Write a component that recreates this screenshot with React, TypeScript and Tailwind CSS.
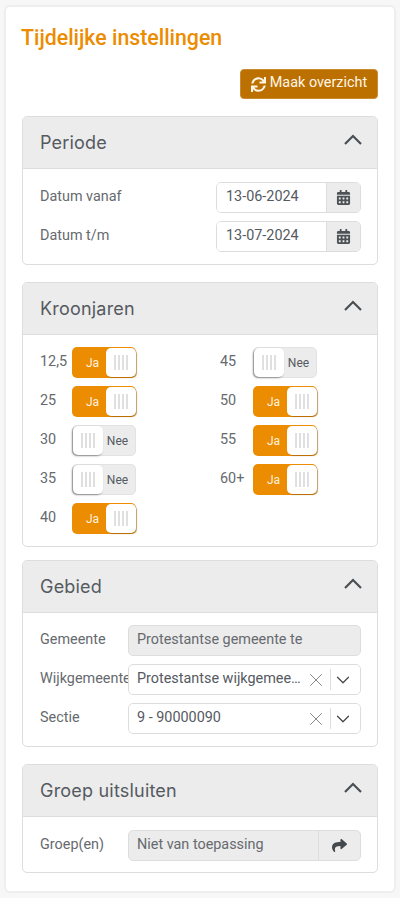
import React from 'react';
import { FaSync, FaCalendarAlt, FaShare } from 'react-icons/fa';
import { X, ChevronDown } from 'lucide-react';

const Panel: React.FC<{ title: string; className?: string; bodyClass?: string; children: React.ReactNode }> = ({ title, className = '', bodyClass = '', children }) => (
  <section className={`rounded-[5px] border border-[#dddddd] bg-white overflow-hidden ${className}`}>
    <div className="h-[52px] bg-[#ececec] border-b border-[#dddddd] flex items-center justify-between pl-[17px] pr-[15px]">
      <h2 className="text-[18px] leading-none text-[#555a5f] tracking-[0.2px] font-[Inter,sans-serif]">{title}</h2>
      <svg viewBox="0 0 18 11" className="w-[18px] h-[11px] -mt-[6px]" fill="none" stroke="#4a4f54" strokeWidth="2.2"><path d="M1 10 9 2l8 8" /></svg>
    </div>
    <div className={bodyClass}>{children}</div>
  </section>
);

const DateRow: React.FC<{ label: string; value: string }> = ({ label, value }) => (
  <div className="flex items-center justify-between h-[31px]">
    <span className="text-[14.4px] text-[#666a6e] pb-[1px]">{label}</span>
    <div className="flex w-[145px] h-[31px] rounded-[5px] border border-[#dddddd] overflow-hidden">
      <div className="w-[109px] pl-[9px] pb-[2px] flex items-center text-[14.4px] text-[#555a5f] bg-white">{value}</div>
      <div className="flex-1 bg-[#ececec] border-l border-[#dddddd] flex items-center justify-center">
        <FaCalendarAlt className="text-[15px] text-[#4d5257]" />
      </div>
    </div>
  </div>
);

const Grip = () => (
  <div className="flex gap-[2px]">
    <span className="w-[2px] h-[15px] bg-[#e0e0e0]" />
    <span className="w-[2px] h-[15px] bg-[#e0e0e0]" />
    <span className="w-[2px] h-[15px] bg-[#e0e0e0]" />
    <span className="w-[2px] h-[15px] bg-[#e0e0e0]" />
  </div>
);

const Toggle: React.FC<{ on: boolean }> = ({ on }) =>
  on ? (
    <div className="w-[64px] h-[31px] rounded-[5px] bg-[#ec8c00] flex items-center">
      <span className="w-[34px] pl-[7px] text-center text-[12px] text-[#fff3e0]">Ja</span>
      <div className="w-[30px] h-[29px] rounded-[5px] bg-white flex items-center justify-center shadow-[1px_1px_1px_rgba(150,90,0,0.6)]"><Grip /></div>
    </div>
  ) : (
    <div className="w-[64px] h-[31px] rounded-[5px] bg-[#ececec] border border-[#e2e2e2] flex items-center">
      <div className="w-[30px] h-[29px] rounded-[5px] bg-white flex items-center justify-center shadow-[-1px_1px_2px_rgba(0,0,0,0.4)]"><Grip /></div>
      <span className="flex-1 pr-[3px] text-center text-[12px] text-[#555a5f]">Nee</span>
    </div>
  );

const Kroon: React.FC<{ label: string; on: boolean; labelW: string }> = ({ label, on, labelW }) => (
  <div className="flex items-center h-[31px]">
    <span className={`${labelW} whitespace-nowrap text-[14.4px] text-[#666a6e] pb-[2px]`}>{label}</span>
    <Toggle on={on} />
  </div>
);

const SelectBox: React.FC<{ value: string }> = ({ value }) => (
  <div className="w-[233px] h-[31px] rounded-[5px] border border-[#dddddd] bg-white flex items-center pl-[8px]">
    <span className="w-[165px] truncate text-[14.4px] text-[#555a5f] pb-[1px]">{value}</span>
    <X className="w-[22px] h-[22px] ml-[3px] text-[#7d7d7d]" strokeWidth={1} />
    <span className="w-px h-[21px] bg-[#dddddd] ml-[3px]" />
    <ChevronDown className="w-[22px] h-[22px] ml-[1px] text-[#444444]" strokeWidth={1.3} />
  </div>
);

const FormRow: React.FC<{ label: string; children: React.ReactNode }> = ({ label, children }) => (
  <div className="flex items-center justify-between h-[31px]">
    <span className="w-[88px] overflow-hidden whitespace-nowrap text-[14.4px] text-[#666a6e] pb-[1px]">{label}</span>
    {children}
  </div>
);

export default function App() {
  const left = [
    { label: '12,5', on: true },
    { label: '25', on: true },
    { label: '30', on: false },
    { label: '35', on: false },
    { label: '40', on: true },
  ];
  const right = [
    { label: '45', on: false },
    { label: '50', on: true },
    { label: '55', on: true },
    { label: '60+', on: true },
  ];

  return (
    <div className="w-[400px] h-[898px] bg-[#f7f7f7] pt-[5px] px-[4px] overflow-hidden font-[Roboto,sans-serif]">
      <div className="h-[888px] rounded-[6px] border-2 border-[#eeeeee] bg-white pl-[16px] pr-[16px] pt-[15px]">
        <h1 className="text-[21.3px] leading-[32px] font-medium text-[#ec8c00] -ml-[1px]">Tijdelijke instellingen</h1>
        <div className="flex justify-end mt-[15px]">
          <button className="h-[30px] w-[138px] rounded-[4px] bg-[#bb7000] border border-[#c98a30] flex items-center justify-center gap-[4px] text-[14.4px] text-[#fff6e8]">
            <FaSync className="text-[15px]" />
            <span className="pb-[2px]">Maak overzicht</span>
          </button>
        </div>

        <Panel title="Periode" className="mt-[17px]" bodyClass="pl-[17px] pr-[16px] pt-[13px] pb-[12px] flex flex-col gap-[8px]">
          <DateRow label="Datum vanaf" value="13-06-2024" />
          <DateRow label="Datum t/m" value="13-07-2024" />
        </Panel>

        <Panel title="Kroonjaren" className="mt-[17px]" bodyClass="pl-[17px] pt-[12px] pb-[12px] flex">
          <div className="w-[180px] flex flex-col gap-[8px]">
            {left.map((k) => <Kroon key={k.label} label={k.label} on={k.on} labelW="w-[32px]" />)}
          </div>
          <div className="flex flex-col gap-[8px]">
            {right.map((k) => <Kroon key={k.label} label={k.label} on={k.on} labelW="w-[33px]" />)}
          </div>
        </Panel>

        <Panel title="Gebied" className="mt-[13px]" bodyClass="pl-[17px] pr-[16px] pt-[12px] pb-[12px] flex flex-col gap-[8px]">
          <FormRow label="Gemeente">
            <div className="w-[233px] h-[31px] rounded-[5px] border border-[#dddddd] bg-[#ececec] flex items-center pl-[8px] pb-[1px] text-[14.4px] text-[#666a6e]">Protestantse gemeente te</div>
          </FormRow>
          <FormRow label="Wijkgemeente">
            <SelectBox value="Protestantse wijkgemeente" />
          </FormRow>
          <FormRow label="Sectie">
            <SelectBox value="9 - 90000090" />
          </FormRow>
        </Panel>

        <Panel title="Groep uitsluiten" className="mt-[17px]" bodyClass="pl-[17px] pr-[16px] pt-[13px] pb-[11px]">
          <FormRow label="Groep(en)">
            <div className="w-[233px] h-[31px] rounded-[5px] border border-[#dddddd] bg-[#ececec] flex items-center text-[14.4px] text-[#666a6e]">
              <span className="w-[189px] pl-[8px] pb-[1px]">Niet van toepassing</span>
              <span className="flex-1 h-full border-l border-[#dddddd] flex items-center justify-center">
                <FaShare className="text-[15px] text-[#44494e]" />
              </span>
            </div>
          </FormRow>
        </Panel>
      </div>
    </div>
  );
}
